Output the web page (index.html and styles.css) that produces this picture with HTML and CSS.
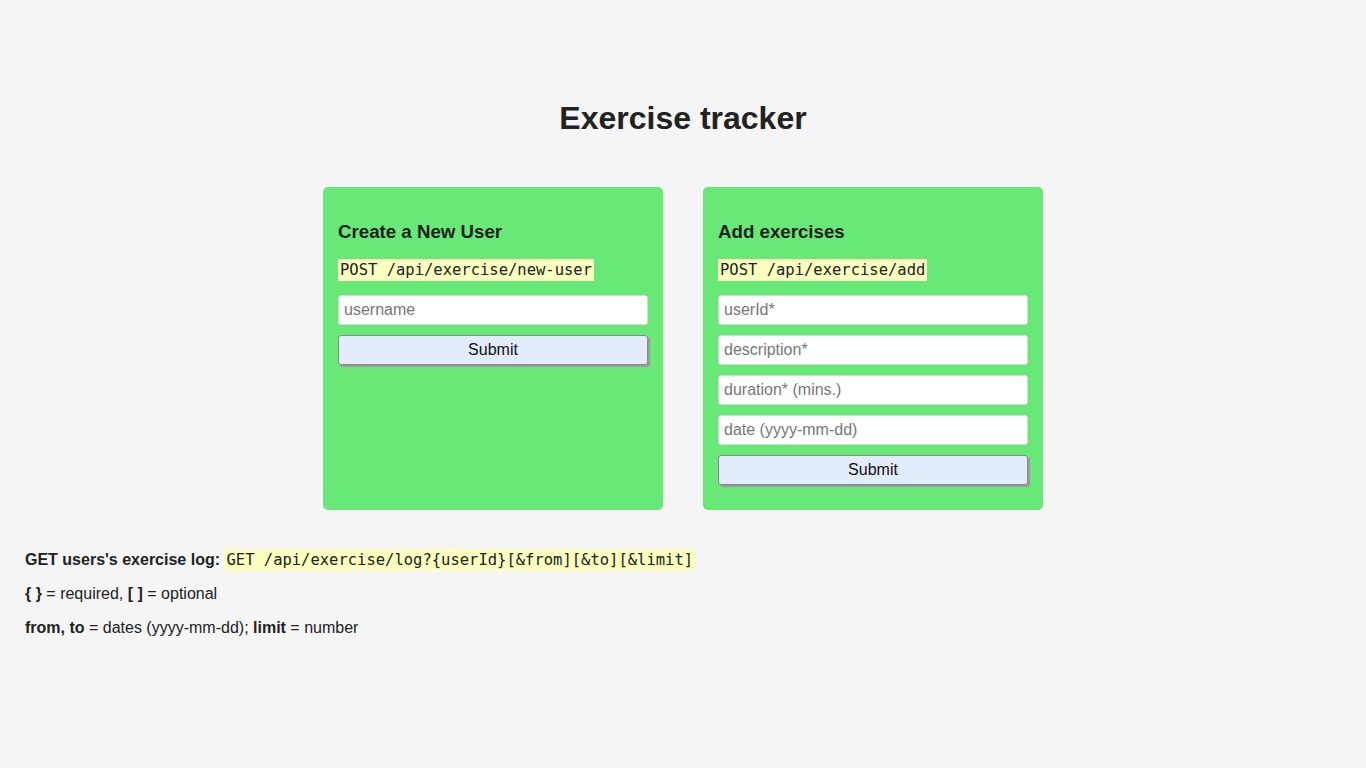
FILE: index.html
```html
<!DOCTYPE html>
<html lang="en">
<head>
<meta charset="utf-8">
<title>Exercise tracker</title>
<link rel="stylesheet" href="styles.css">
</head>
<body>
<h1 class="title">Exercise tracker</h1>
<div class="cards">
  <form class="card">
    <h3 class="card-title">Create a New User</h3>
    <p class="endpoint"><code class="code">POST /api/exercise/new-user</code></p>
    <input class="field" type="text" placeholder="username">
    <button class="submit" type="button">Submit</button>
  </form>
  <form class="card">
    <h3 class="card-title">Add exercises</h3>
    <p class="endpoint"><code class="code">POST /api/exercise/add</code></p>
    <input class="field" type="text" placeholder="userId*">
    <input class="field" type="text" placeholder="description*">
    <input class="field" type="text" placeholder="duration* (mins.)">
    <input class="field" type="text" placeholder="date (yyyy-mm-dd)">
    <button class="submit" type="button">Submit</button>
  </form>
</div>
<div class="notes">
  <p class="note"><strong>GET users's exercise log:</strong> <code class="code">GET /api/exercise/log?{userId}[&amp;from][&amp;to][&amp;limit]</code></p>
  <p class="note"><strong>{ }</strong> = required, <strong>[ ]</strong> = optional</p>
  <p class="note"><strong>from, to</strong> = dates (yyyy-mm-dd); <strong>limit</strong> = number</p>
</div>
</body>
</html>
```
FILE: styles.css
```css
html, body {
  margin: 0;
  padding: 0;
}
body {
  background: #f5f5f5;
  color: #222;
  font-family: "Liberation Sans", Arial, sans-serif;
  font-size: 16px;
  padding: 0 25px;
}
.title {
  margin: 100px 0 0;
  font-size: 32px;
  line-height: 37px;
  text-align: center;
  font-weight: bold;
}
.cards {
  display: flex;
  justify-content: center;
  gap: 40px;
  margin-top: 50px;
}
.card {
  width: 340px;
  box-sizing: border-box;
  background: #67e877;
  border-radius: 5px;
  padding: 34px 15px 25px;
  display: flex;
  flex-direction: column;
}
.card-title {
  margin: 0;
  font-size: 18.7px;
  line-height: 22px;
  font-weight: bold;
  color: #1e1e1e;
}
.endpoint {
  margin: 16px 0 14px;
  line-height: 22px;
}
.code {
  font-family: "DejaVu Sans Mono", monospace;
  font-size: 15.5px;
  background: #fbffc0;
  padding: 2px 2px;
  line-height: 18px;
  color: #222;
}
.field {
  width: 310px;
  height: 30px;
  box-sizing: border-box;
  border: 1px solid #d6d6d6;
  border-radius: 3px;
  background: #fff;
  padding: 0 5px;
  font-family: "Liberation Sans", Arial, sans-serif;
  font-size: 16px;
  margin: 0 0 10px;
  outline: none;
}
.field::placeholder {
  color: #777;
}
.submit {
  width: 310px;
  height: 30px;
  box-sizing: border-box;
  border: 1px solid #8a8a8a;
  border-radius: 3px;
  background: #e3ecfd;
  color: #111;
  font-family: "Liberation Sans", Arial, sans-serif;
  font-size: 16px;
  box-shadow: 2px 2px 0 #9a9a9a;
  padding: 0;
  cursor: pointer;
}
.notes {
  margin-top: 41px;
}
.note {
  margin: 0 0 16px;
  line-height: 18px;
}
.note strong {
  font-weight: bold;
}
```
